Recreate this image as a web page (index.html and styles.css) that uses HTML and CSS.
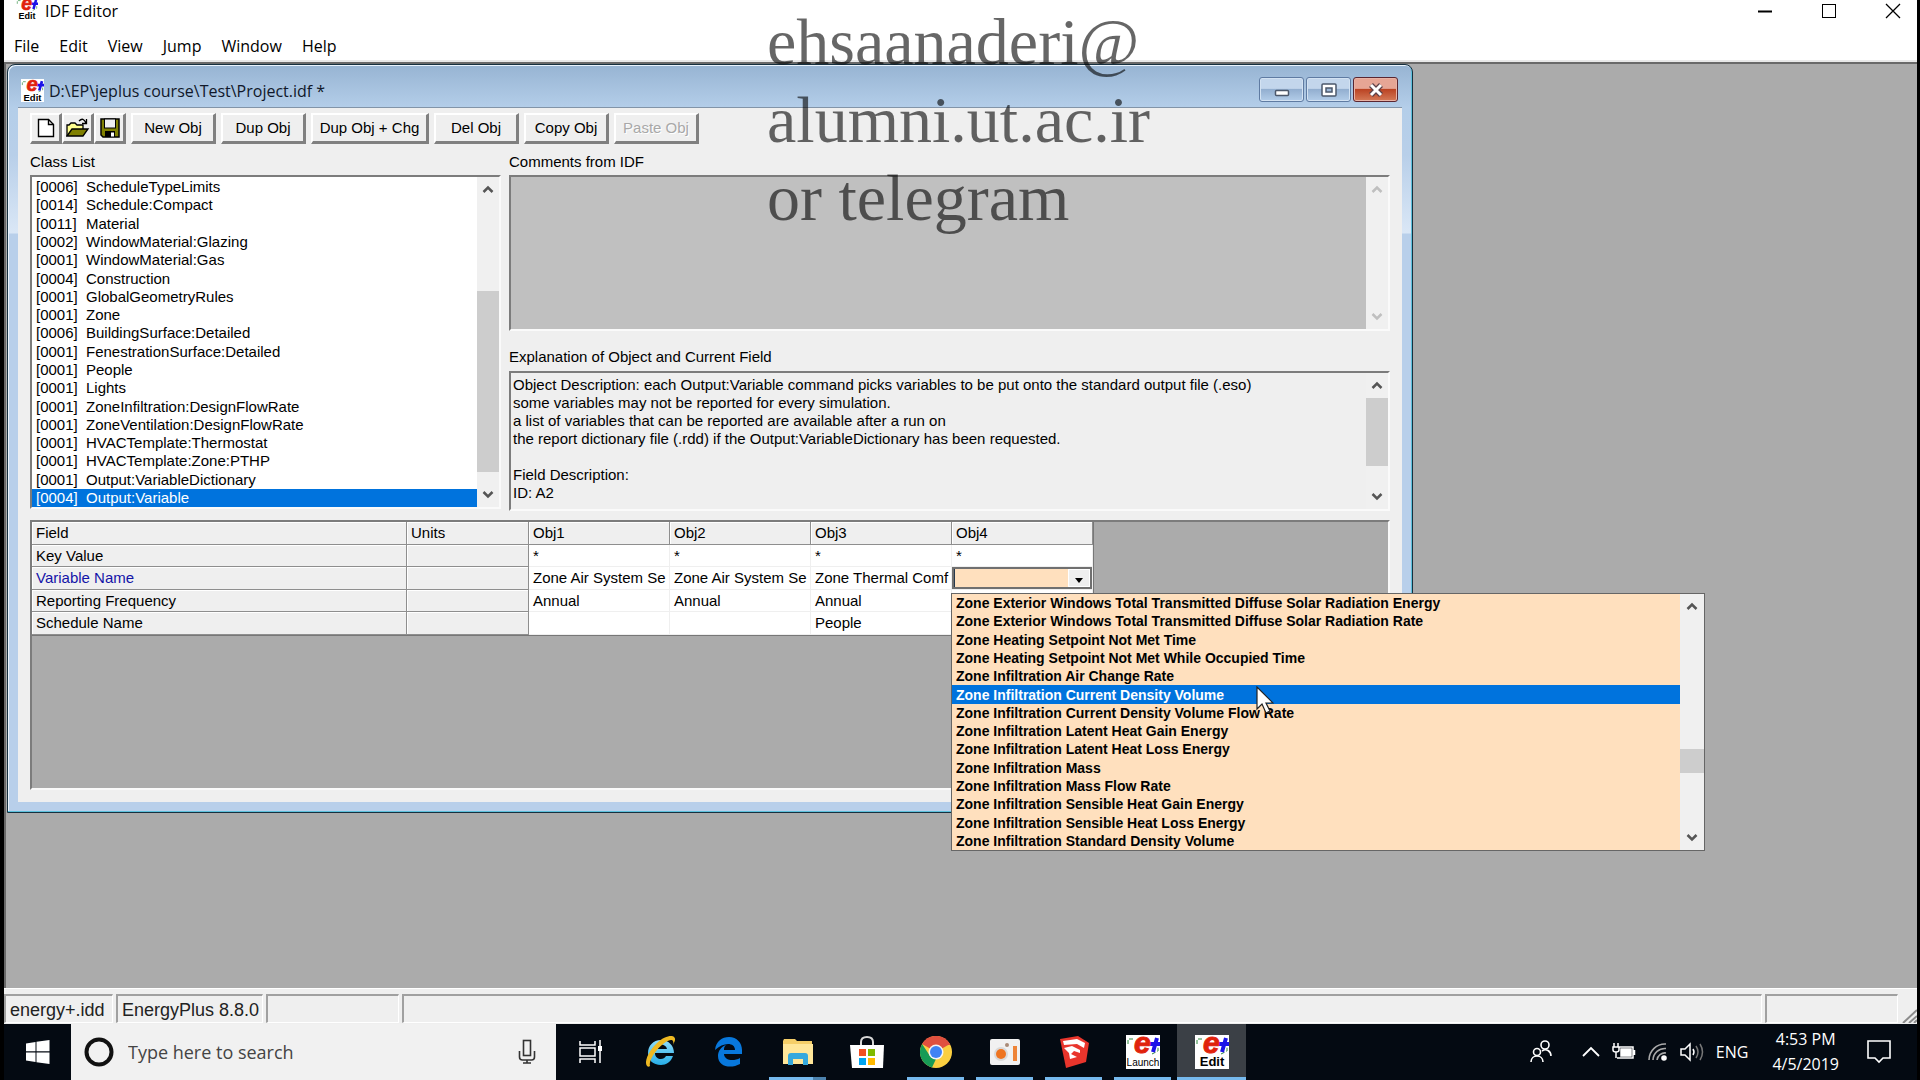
FILE: index.html
```html
<!DOCTYPE html>
<html lang="en">
<head>
<meta charset="utf-8">
<title>IDF Editor</title>
<link rel="stylesheet" href="styles.css">
</head>
<body>
<svg class="defs" aria-hidden="true">
  <symbol id="eplus" viewBox="0 0 34 22">
    <path d="M2 9V4h6M26 19l6-3v-4" fill="none" stroke="#2c8a3c" stroke-width="1" stroke-dasharray="4 2"/>
    <path d="M24 9h10M31 3l-4 14" stroke="#1a12e8" stroke-width="4" fill="none"/>
    <text x="8" y="18" font-family="Liberation Sans" font-size="30" font-weight="bold" font-style="italic" fill="#e0220c" stroke="#e0220c">e</text>
  </symbol>
  <symbol id="up" viewBox="0 0 12 8"><path d="M1.500 7L6 2.500L10.500 7" fill="none" stroke="currentColor" stroke-width="2.500"/></symbol>
  <symbol id="down" viewBox="0 0 12 8"><path d="M1.500 1L6 5.500L10.500 1" fill="none" stroke="currentColor" stroke-width="2.500"/></symbol>
</svg>

<div class="app">
  <header class="titlebar">
    <svg class="app-icon" viewBox="0 0 34 34"><rect width="34" height="34" fill="#fff"/><use href="#eplus" width="34" height="22"/><text x="17" y="33" text-anchor="middle" font-family="Liberation Sans" font-weight="bold" font-size="14">Edit</text></svg>
    <h1 class="app-title">IDF Editor</h1>
    <button class="win-btn" aria-label="Minimize"><svg width="16" height="16"><path d="M1 8.500h14" stroke="#000" stroke-width="2"/></svg></button>
    <button class="win-btn" aria-label="Maximize"><svg width="16" height="16"><rect x="1.500" y="1.500" width="13" height="13" fill="none" stroke="#000"/></svg></button>
    <button class="win-btn" aria-label="Close"><svg width="16" height="16"><path d="M1 1l14 14M15 1L1 15" stroke="#000" stroke-width="1.300"/></svg></button>
  </header>
  <nav class="menubar">
    <button>File</button><button>Edit</button><button>View</button><button>Jump</button><button>Window</button><button>Help</button>
  </nav>

  <main class="mdi">
    <section class="child">
      <div class="child-title">
        <svg class="child-icon" viewBox="0 0 34 34"><rect width="34" height="34" fill="#fff"/><use href="#eplus" width="34" height="22"/><text x="17" y="33" text-anchor="middle" font-family="Liberation Sans" font-weight="bold" font-size="14">Edit</text></svg>
        <h2>D:\EP\jeplus course\Test\Project.idf *</h2>
        <button class="aero" aria-label="Minimize document"><svg width="16" height="14"><rect x="1.500" y="7.500" width="13" height="5" rx="1" fill="#fff" stroke="#4c586b" stroke-width="1.500"/></svg></button>
        <button class="aero" aria-label="Maximize document"><svg width="16" height="14"><rect x="1" y="1" width="14" height="12" rx="1" fill="#fff" stroke="#4c586b" stroke-width="1.500"/><rect x="5" y="5" width="6" height="4" fill="#9fb9d8" stroke="#4c586b" stroke-width="1.500"/></svg></button>
        <button class="aero close" aria-label="Close document"><svg width="16" height="14"><path d="M3 2l10 10M13 2L3 12" stroke="#5b4048" stroke-width="5.500"/><path d="M3 2l10 10M13 2L3 12" stroke="#fff" stroke-width="3"/></svg></button>
      </div>

      <div class="client">
        <div class="toolbar">
          <div class="tool-icons">
            <button class="btn icon" aria-label="New"><svg width="18" height="20"><path d="M1.500 1.500h10l5 5v12h-15z" fill="#fff" stroke="#000" stroke-width="1.400"/><path d="M11.500 1.500v5h5" fill="none" stroke="#000" stroke-width="1.400"/></svg></button>
            <button class="btn icon" aria-label="Open"><svg width="24" height="20"><path d="M1 18V7h2l2-2h4l2 2h6v4" fill="#ffff90" stroke="#000" stroke-width="1.300"/><path d="M1 18l5-7h16l-5 7z" fill="#808000" stroke="#000" stroke-width="1.300"/><path d="M13 3c3-3 5-2 7 2M20.500 1v4.500H16" fill="none" stroke="#000" stroke-width="1.300"/></svg></button>
            <button class="btn icon" aria-label="Save"><svg width="20" height="20"><path d="M1 1h18v18H3l-2-2z" fill="#808000" stroke="#000" stroke-width="1.500"/><rect x="4.500" y="1" width="11" height="9" fill="#efefef" stroke="#000"/><rect x="5" y="13" width="10" height="6"/><rect x="11" y="14.500" width="3" height="4" fill="#fff"/></svg></button>
          </div>
          <button class="btn">New Obj</button>
          <button class="btn">Dup Obj</button>
          <button class="btn wide">Dup Obj + Chg</button>
          <button class="btn">Del Obj</button>
          <button class="btn">Copy Obj</button>
          <button class="btn" disabled>Paste Obj</button>
        </div>

        <div class="panels">
          <div class="panel classes">
            <h3 class="label" id="class-label">Class List</h3>
            <div class="sunken class-box">
              <ul class="class-list" role="listbox" aria-labelledby="class-label">
                <li><span>[0006]</span>ScheduleTypeLimits</li>
                <li><span>[0014]</span>Schedule:Compact</li>
                <li><span>[0011]</span>Material</li>
                <li><span>[0002]</span>WindowMaterial:Glazing</li>
                <li><span>[0001]</span>WindowMaterial:Gas</li>
                <li><span>[0004]</span>Construction</li>
                <li><span>[0001]</span>GlobalGeometryRules</li>
                <li><span>[0001]</span>Zone</li>
                <li><span>[0006]</span>BuildingSurface:Detailed</li>
                <li><span>[0001]</span>FenestrationSurface:Detailed</li>
                <li><span>[0001]</span>People</li>
                <li><span>[0001]</span>Lights</li>
                <li><span>[0001]</span>ZoneInfiltration:DesignFlowRate</li>
                <li><span>[0001]</span>ZoneVentilation:DesignFlowRate</li>
                <li><span>[0001]</span>HVACTemplate:Thermostat</li>
                <li><span>[0001]</span>HVACTemplate:Zone:PTHP</li>
                <li><span>[0001]</span>Output:VariableDictionary</li>
                <li class="selected"><span>[0004]</span>Output:Variable</li>
              </ul>
              <div class="scroll classes-scroll"><svg><use href="#up"/></svg><i></i><svg><use href="#down"/></svg></div>
            </div>
          </div>
          <div class="panel">
            <label class="label" for="comments">Comments from IDF</label>
            <div class="sunken comments-box">
              <textarea id="comments" class="comments"></textarea>
              <div class="scroll off"><svg><use href="#up"/></svg><svg><use href="#down"/></svg></div>
            </div>
            <label class="label second" for="explain">Explanation of Object and Current Field</label>
            <div class="sunken explain-box">
              <textarea id="explain" class="explain" readonly>Object Description: each Output:Variable command picks variables to be put onto the standard output file (.eso)
some variables may not be reported for every simulation.
a list of variables that can be reported are available after a run on
the report dictionary file (.rdd) if the Output:VariableDictionary has been requested.

Field Description:
ID: A2</textarea>
              <div class="scroll explain-scroll"><svg><use href="#up"/></svg><i></i><svg><use href="#down"/></svg></div>
            </div>
          </div>
        </div>

        <div class="sunken grid-box">
          <table class="grid">
            <colgroup><col class="c-field"><col class="c-units"><col><col><col><col></colgroup>
            <thead><tr><th>Field</th><th>Units</th><th>Obj1</th><th>Obj2</th><th>Obj3</th><th>Obj4</th></tr></thead>
            <tbody>
              <tr><th>Key Value</th><th></th><td>*</td><td>*</td><td>*</td><td>*</td></tr>
              <tr><th class="current"><label for="combo">Variable Name</label></th><th></th><td>Zone Air System Se</td><td>Zone Air System Se</td><td>Zone Thermal Comf</td>
                <td class="editing">
                  <div class="combo"><select id="combo"><option></option></select><span class="drop"></span></div>
                  <div class="popup">
                    <ul role="listbox" aria-label="Variable Name values">
                      <li>Zone Exterior Windows Total Transmitted Diffuse Solar Radiation Energy</li>
                      <li>Zone Exterior Windows Total Transmitted Diffuse Solar Radiation Rate</li>
                      <li>Zone Heating Setpoint Not Met Time</li>
                      <li>Zone Heating Setpoint Not Met While Occupied Time</li>
                      <li>Zone Infiltration Air Change Rate</li>
                      <li class="selected">Zone Infiltration Current Density Volume</li>
                      <li>Zone Infiltration Current Density Volume Flow Rate</li>
                      <li>Zone Infiltration Latent Heat Gain Energy</li>
                      <li>Zone Infiltration Latent Heat Loss Energy</li>
                      <li>Zone Infiltration Mass</li>
                      <li>Zone Infiltration Mass Flow Rate</li>
                      <li>Zone Infiltration Sensible Heat Gain Energy</li>
                      <li>Zone Infiltration Sensible Heat Loss Energy</li>
                      <li>Zone Infiltration Standard Density Volume</li>
                    </ul>
                    <div class="scroll popup-scroll"><svg><use href="#up"/></svg><i></i><svg><use href="#down"/></svg></div>
                    <svg class="cursor" viewBox="0 0 18 28"><path d="M1 1v22l5-5l4 9l4-2l-4-8h7z" fill="#fff" stroke="#222" stroke-width="1.200"/></svg>
                  </div>
                </td></tr>
              <tr><th>Reporting Frequency</th><th></th><td>Annual</td><td>Annual</td><td>Annual</td><td></td></tr>
              <tr><th>Schedule Name</th><th></th><td></td><td></td><td>People</td><td></td></tr>
            </tbody>
          </table>
        </div>
      </div>
    </section>
  </main>

  <footer class="status">
    <div class="cell s1">energy+.idd</div><div class="cell s2">EnergyPlus 8.8.0</div><div class="cell s3"></div><div class="cell s4"></div><div class="cell s3"></div>
    <svg class="grip" width="16" height="14"><path d="M2 14L16 1M8 14l8-7M13 14l3-3" stroke="#8c8c8c" stroke-width="2"/></svg>
  </footer>

  <div class="taskbar">
    <button class="start" aria-label="Start"><svg width="24" height="24"><path d="M0 3.500L9.500 2v9.300H0zM10.500 1.800L23.500 0v11.300h-13zM0 12.500h9.500V22L0 20.500zM10.500 12.500h13V24l-13-1.800z" fill="#fff"/></svg></button>
    <div class="search">
      <svg width="32" height="32"><circle cx="16" cy="16" r="12.500" fill="none" stroke="#111" stroke-width="4"/></svg>
      <input type="text" placeholder="Type here to search" aria-label="Search">
      <svg width="18" height="26"><rect x="5.500" y="1.500" width="7" height="15" fill="none" stroke="#333" stroke-width="1.600"/><path d="M1.500 12v6q0 3 3 3h9q3 0 3-3v-6M9 21v3.500M5 24h8" fill="none" stroke="#333" stroke-width="1.600"/></svg>
    </div>
    <div class="tasks">
      <button class="task" aria-label="Task view"><svg width="24" height="24"><path d="M1 1v4h15V1M1 23v-4h15v4M1 8h15v8H1zM21 0v6M21 11v12" fill="none" stroke="#fff" stroke-width="1.500"/><rect x="19" y="6" width="4" height="5" fill="#fff"/></svg></button>
      <button class="task" aria-label="Internet Explorer"><svg width="34" height="34"><defs><linearGradient id="ie" x2="0" y2="1"><stop offset="0" stop-color="#8fdcfb"/><stop offset="1" stop-color="#27aee8"/></linearGradient></defs><path d="M31 18H12c0 4 3 6 6 6 2 0 4-1 5-3h7c-2 6-7 9-12 9C10 30 5 25 5 18S10 5 18 5s13 6 13 13zM12 14h12c-1-6-11-6-12 0z" fill="url(#ie)" fill-rule="evenodd"/><path d="M4 31c-3-4 1-14 9-22S29 0 31 2s1 4-1 8c1-3 0-5-2-5-3 0-9 4-14 10S6 27 7 31c-1 1-2 1-3 0z" fill="#eeb922"/></svg></button>
      <button class="task" aria-label="Edge"><svg width="30" height="32"><path d="M1 14C2 5 8 1 15 1c8 0 13 6 13 13v4H10c0 6 9 8 16 4v6c-9 5-22 3-22-8 0-5 3-9 8-11-2 2-2 3-2 5h11c0-8-12-8-20 0z" fill="#0878dc"/></svg></button>
      <button class="task open stacked" aria-label="File Explorer"><svg width="32" height="28"><path d="M1 3l1-2h11l2 2h15v23H1z" fill="#f5ce68"/><path d="M1 6h30v20H1z" fill="#ffe699"/><path d="M6 27V18q0-3 3-3h14q3 0 3 3v9h-5v-6H11v6z" fill="#35a8dd"/></svg></button>
      <button class="task" aria-label="Store"><svg width="34" height="34"><path d="M11 10V7q0-5 6-5t6 5v3" fill="none" stroke="#d8d8d8" stroke-width="2"/><path d="M0 10h34l-1 23H2z" fill="#fff"/><path d="M9 14h7v7H9z" fill="#f25022"/><path d="M18 14h7v7h-7z" fill="#7fba00"/><path d="M9 23h7v7H9z" fill="#00a4ef"/><path d="M18 23h7v7h-7z" fill="#ffb900"/></svg></button>
      <button class="task open" aria-label="Chrome"><svg width="32" height="32"><circle cx="16" cy="16" r="16" fill="#fbcf40"/><path d="M16 16L2.100 8A16 16 0 0 1 29.900 8z" fill="#e0503f"/><path d="M16 9h14.400L29 6.700 16 0z" fill="#e0503f"/><path d="M2.100 8L10 20l6 3-4 8.500A16 16 0 0 1 2.100 8z" fill="#189b56"/><circle cx="16" cy="16" r="7.500" fill="#f4f4f4"/><circle cx="16" cy="16" r="6" fill="#3f82f4"/></svg></button>
      <button class="task open" aria-label="Screen recorder"><svg width="30" height="26"><rect width="30" height="26" rx="2" fill="#f1f1f1"/><circle cx="11" cy="15" r="7" fill="#d9d9d9"/><circle cx="11" cy="15" r="5" fill="#ee7420"/><circle cx="17" cy="6" r="2" fill="#a98b78"/><rect x="23" y="7" width="4" height="15" fill="#ee8438"/></svg></button>
      <button class="task open" aria-label="SketchUp"><svg width="30" height="32"><path d="M1 3l18-3 11 7-3 19-20 6z" fill="#e9352c"/><path d="M4 5l14-2 8 4-1 5-7-4-13 1zM5 12l8-2 8 4v3l-6-2-3 3 6 3-7 2-1-6z" fill="#fff"/></svg></button>
      <button class="task open" aria-label="EP-Launch"><svg width="34" height="34"><rect width="34" height="34" fill="#fff"/><use href="#eplus" width="34" height="22"/><text x="17" y="31" text-anchor="middle" font-family="Liberation Sans" font-size="10">Launch</text></svg></button>
      <button class="task open active" aria-label="IDF Editor"><svg width="34" height="34"><rect width="34" height="34" fill="#fff"/><use href="#eplus" width="34" height="22"/><text x="17" y="31" text-anchor="middle" font-family="Liberation Sans" font-weight="bold" font-size="13">Edit</text></svg></button>
    </div>
    <div class="tray">
      <svg width="22" height="24" fill="none" stroke="#fff" stroke-width="1.600"><circle cx="15" cy="5" r="4"/><circle cx="7" cy="12" r="3.500"/><path d="M1 22c0-8 12-8 12 0M12 11c4-3 9 0 9 5"/></svg>
      <svg class="chev" width="18" height="12" fill="none" stroke="#fff" stroke-width="1.800"><path d="M1 10l8-8 8 8"/></svg>
      <svg width="24" height="18" fill="none" stroke="#fff" stroke-width="1.500"><path d="M7 4h14v11H5M22.500 7v5M2 0v4M6 0v4M1 4h6v3q0 2-3 2t-3-2zM4 9v6"/><path d="M9 6h10v7H9z" fill="#fff"/></svg>
      <svg width="20" height="18" fill="none" stroke="#aaa" stroke-width="1.600"><path d="M1 17A16 16 0 0 1 18 1M5 17A12 12 0 0 1 18 5.500M9 17a8 8 0 0 1 9-7"/><circle cx="16" cy="15" r="2" fill="#fff" stroke="#fff"/></svg>
      <svg width="24" height="20" fill="none" stroke="#fff" stroke-width="1.500"><path d="M1 7h4l5-5v16l-5-5H1zM13 7q2 3 0 6"/><path d="M16 4q4 6 0 12M20 2q5 8 0 16" stroke="#777"/></svg>
      <span class="lang">ENG</span>
      <time class="clock">4:53 PM<br>4/5/2019</time>
      <svg width="24" height="24" fill="none" stroke="#fff" stroke-width="1.600"><path d="M1 1h22v17h-7l-4 4-4-4H1z"/></svg>
    </div>
  </div>
</div>
<p class="watermark">ehsaanaderi@<br>alumni.ut.ac.ir<br>or telegram</p>
</body>
</html>
```
FILE: styles.css
```css
* { box-sizing: border-box; }
body { margin: 0; background: #000; }
button, input, textarea, select { font: inherit; color: inherit; }
h1, h2, h3, ul, p { margin: 0; padding: 0; font-weight: normal; list-style: none; }
.defs { position: absolute; width: 0; height: 0; }
svg { display: block; flex: none; }

.app {
  display: flex; flex-direction: column; min-height: 100vh;
  margin: 0 3px 0 4px; background: #fff;
  font: 15px/18px "Liberation Sans", Arial, sans-serif; color: #000;
}

/* Main window frame */
.titlebar { display: flex; align-items: center; height: 22px; padding-left: 12px; }
.app-icon { width: 22px; height: 22px; align-self: flex-end; margin-bottom: 2px; }
.app-title { flex: 1; margin-left: 7px; font: 16px/20px "Open Sans", sans-serif; }
.win-btn { width: 64px; height: 20px; padding: 0; border: 0; background: none; display: grid; place-items: center; }
.win-btn:last-child { width: 48px; margin-left: 8px; }
.menubar { display: flex; gap: 20px; height: 40px; padding: 11px 10px 0; border-bottom: 2px solid #e8e8e8; }
.menubar button { height: 26px; padding: 0; border: 0; background: none; font: 16px/26px "Open Sans", sans-serif; }

.mdi { flex: 1; background: #ababab; border: solid #696969; border-width: 2px 0 0 2px; padding-left: 1px; }

/* Document window */
.child {
  margin-right: 504px; height: 749px; display: flex; flex-direction: column;
  padding: 0 10px 10px;
  border: 1px solid #16303f; border-radius: 8px 8px 0 0;
  background: linear-gradient(#97b4d3 0, #b4cee9 43px, #b8cfe9 90px, #dae7f6 168px, #b8cfea 169px);
  box-shadow: inset -1px -1px #5cc0dc, inset 1px 1px #eaf3fc;
}
.child-title { display: flex; align-items: center; gap: 2px; height: 42px; padding: 9px 4px 0 3px; }
.child-icon { width: 23px; height: 23px; }
.child-title h2 { flex: 1; margin-left: 3px; font: 16px/24px "Open Sans", sans-serif; color: #10182a; }
.aero {
  width: 45px; height: 25px; padding: 0; display: grid; place-items: center;
  border: 1px solid #5f7ba2; border-radius: 3px;
  background: linear-gradient(#c3d6ec 0 45%, #93afd0 50%, #b3cde9);
  box-shadow: inset 0 0 0 1px #d3e2f2; align-self: flex-start; margin-top: 3px;
}
.aero.close { border-color: #5a2631; background: linear-gradient(#e6a595 0 45%, #bb4424 50%, #d57a58); box-shadow: inset 0 0 0 1px #e9b3a6; }
.client { flex: 1; display: flex; flex-direction: column; background: #efefef; border-top: 1px solid #8294a8; padding: 5px 12px 12px; }

.toolbar { display: flex; gap: 5px; }
.tool-icons { display: flex; }
.btn {
  width: 85px; height: 31px; padding: 0; background: #efefef;
  border: solid; border-width: 2px 3px 3px 2px; border-color: #fff #808080 #808080 #fff;
}
.btn.wide { width: 118px; }
.btn.icon { width: 32px; display: grid; place-items: center; }
.btn:disabled { color: #a8a8a8; text-shadow: 1px 1px #fff; }

.panels { display: grid; grid-template-columns: 471px 1fr; gap: 8px; margin-top: 9px; }
.panel { display: flex; flex-direction: column; }
.label { display: block; font-size: 15px; line-height: 18px; margin-bottom: 4px; }
.label.second { margin: 17px 0 5px; }
.sunken { display: flex; border: solid; border-width: 2px; border-color: #7c7c7c #fafafa #fafafa #7c7c7c; background: #fff; }
.class-box { height: 334px; }
.class-list { flex: 1; display: flex; flex-direction: column; padding-top: 1px; }
.class-list li { flex: 1; padding-left: 4px; display: flex; align-items: center; line-height: 16px; }
.class-list span { width: 50px; }
.selected { background: #0073dd; color: #fff; }

.scroll { width: 22px; background: #f0f0f0; color: #555; display: flex; flex-direction: column; align-items: center; padding: 8px 0; flex: none; }
.scroll svg { width: 12px; height: 8px; }
.scroll svg:last-child { margin-top: auto; }
.scroll i { width: 100%; background: #cdcdcd; }
.scroll.off { color: #bfbfbf; }
.classes-scroll i { height: 181px; margin-top: 98px; }
.explain-scroll i { height: 68px; margin-top: 9px; }
.popup-scroll i { height: 24px; margin-top: 139px; }

textarea { flex: 1; resize: none; border: 0; outline: 0; margin: 0; overflow: hidden; display: block; white-space: pre; }
.comments-box { height: 156px; }
.comments { background: #c0c0c0; }
.explain-box { height: 140px; background: #efefef; }
.explain { background: #efefef; padding: 3px 2px; line-height: 18px; }

/* Object grid */
.grid-box { margin-top: 9px; flex: 1; background: #ababab; align-items: flex-start; }
.grid { table-layout: fixed; width: 1061px; border-collapse: separate; border-spacing: 0; background: #fff; border-right: 1px solid #777; border-bottom: 1px solid #777; }
.grid col { width: 141px; }
.grid .c-field { width: 375px; }
.grid .c-units { width: 122px; }
.grid tr { height: 23px; }
.grid tbody tr:nth-child(odd) { height: 22px; }
.grid th, .grid td { padding: 0 4px; text-align: left; font-weight: normal; line-height: 18px; white-space: nowrap; overflow: hidden; border-right: 1px solid #efefef; border-bottom: 1px solid #efefef; }
.grid th { background: #efefef; border-color: #8e8e8e; box-shadow: inset 1px 1px #fff; }
.grid .current { color: #1414a8; }
.grid .editing { position: relative; overflow: visible; padding: 0; }
.combo { position: relative; height: 22px; border: 2px solid #707070; background: #ffe0be; }
.combo select { appearance: none; display: block; width: 100%; height: 100%; border: 0; border-left: 1px solid #26384c; background: #ffe0be; padding: 0; outline: 0; }
.drop { position: absolute; top: 0; right: 0; bottom: 0; width: 22px; background: #efefef; border: 1px solid #fff; pointer-events: none; }
.drop::after { content: ""; position: absolute; left: 6px; top: 8px; border: 4px solid transparent; border-top: 5px solid #000; border-bottom: 0; }

.popup { position: absolute; z-index: 2; left: -1px; top: 26px; width: 754px; height: 258px; display: flex; border: 1px solid #666; background: #ffe0be; }
.popup ul { flex: 1; display: flex; flex-direction: column; font-size: 14px; font-weight: bold; }
.popup li { flex: 1; display: flex; align-items: center; padding-left: 4px; line-height: 16px; }
.popup-scroll { width: 24px; }
.cursor { position: absolute; left: 304px; top: 92px; width: 18px; height: 28px; }

/* Status bar */
.status { display: flex; gap: 3px; height: 36px; padding: 5px 0 1px; background: #efefef; border-top: 1px solid #fff; font: 18px/28px "Liberation Sans", Arial, sans-serif; color: #222; }
.cell { border: solid; border-width: 2px 1px 1px 2px; border-color: #a0a0a0 #fff #fff #a0a0a0; padding-left: 4px; white-space: nowrap; overflow: hidden; }
.s1 { width: 109px; } .s2 { width: 147px; } .s3 { width: 133px; } .s4 { flex: 1; }
.grip { align-self: flex-end; }

/* Taskbar */
.taskbar { display: flex; height: 56px; background: #040a12; color: #fff; font: 16px/31px "Open Sans", sans-serif; }
.start, .task { padding: 0; border: 0; background: none; display: grid; place-items: center; }
.start { width: 67px; }
.search { width: 485px; display: flex; align-items: center; padding: 0 20px 0 12px; background: #f1f1f1; }
.search input { flex: 1; min-width: 0; border: 0; outline: 0; background: none; padding: 0; margin-left: 13px; font-size: 18px; color: #444; }
.search input::placeholder { color: #444; opacity: 1; }
.tasks { display: flex; flex: 1; }
.task { width: 69px; position: relative; }
.task.open::after { content: ""; position: absolute; bottom: 0; left: 6px; right: 6px; height: 3px; background: #76b9ed; }
.task.stacked::after { background: linear-gradient(90deg, #76b9ed 0 44px, #4d83ae 44px); }
.task.active { background: #3b4046; }
.task.active::after { left: 0; right: 0; }
.tray { display: flex; align-items: center; gap: 12px; padding-right: 26px; }
.tray .chev { margin: 0 0 0 18px; }
.lang { line-height: 24px; font-size: 16px; }
.clock { font-size: 16px; line-height: 25px; text-align: center; margin: 0 16px 0 12px; }

.watermark { position: absolute; left: 767px; top: 3px; font: 66px/78px "Liberation Serif", "Times New Roman", serif; color: rgba(0, 0, 0, .6); pointer-events: none; z-index: 3; }
```
